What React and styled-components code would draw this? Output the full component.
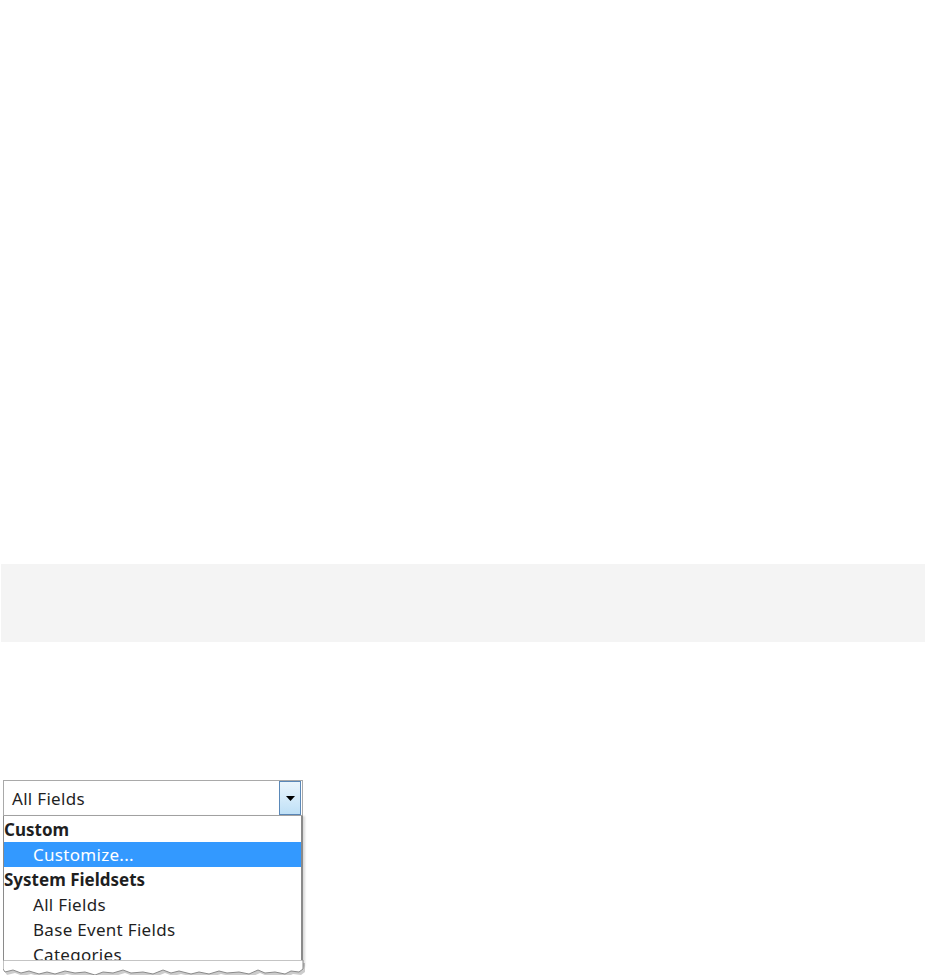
import React from 'react';
import styled, { createGlobalStyle } from 'styled-components';

const GlobalStyle = createGlobalStyle`
    body {
        margin: 0;
        background: #ffffff;
        font-family: 'Noto Sans', 'Open Sans', sans-serif;
    }
`;

const Page = styled.div`
    width: 925px;
    height: 975px;
    overflow: hidden;
    display: flex;
    flex-direction: column;
    padding-top: 564px;
    box-sizing: border-box;

    & > * {
        flex-shrink: 0;
    }
`;

const GrayBand = styled.div`
    margin-left: 1px;
    height: 78px;
    background: #f4f4f4;
`;

const Figure = styled.div`
    margin-top: 138px;
    margin-left: 3px;
    width: 300px;
    display: flex;
    flex-direction: column;
`;

const Combo = styled.div`
    height: 34px;
    border: 1px solid #a9a9a9;
    background: #ffffff;
    display: flex;
    align-items: center;
    justify-content: space-between;
    padding-left: 8px;
`;

const ComboText = styled.span`
    font-size: 17px;
    letter-spacing: 0.3px;
    color: #1f1f1f;
    padding-top: 1px;
`;

const ArrowButton = styled.div`
    width: 20px;
    height: 32px;
    margin-right: 1px;
    border: 1px solid #5a88b8;
    background: linear-gradient(to bottom, #eaf5fc 0%, #d5ebfa 50%, #bfe0f6 100%);
    display: flex;
    align-items: center;
    justify-content: center;
`;

const List = styled.div`
    border-left: 1px solid #8a8a8a;
    border-right: 2px solid #8a8a8a;
    box-shadow: 2px 0 2px rgba(0, 0, 0, 0.15);
    display: flex;
    flex-direction: column;
    padding-top: 1px;
    height: 151px;
    box-sizing: border-box;
    overflow: hidden;
`;

const Row = styled.div`
    height: 25px;
    flex-shrink: 0;
    display: flex;
    align-items: center;
    font-size: 17px;
    white-space: nowrap;
    padding-left: ${({ $indent }) => ($indent ? 29 : 0)}px;
    font-weight: ${({ $group }) => ($group ? 700 : 400)};
    letter-spacing: ${({ $group }) => ($group ? 0 : 0.3)}px;
    color: ${({ $active }) => ($active ? '#ffffff' : '#1f1f1f')};
    background: ${({ $active }) => ($active ? '#3399ff' : 'transparent')};
`;

const TornEdge = styled.svg`
    display: block;
    margin-top: -7px;
`;

const rows = [
    { label: 'Custom', group: true },
    { label: 'Customize...', indent: true, active: true },
    { label: 'System Fieldsets', group: true },
    { label: 'All Fields', indent: true },
    { label: 'Base Event Fields', indent: true },
    { label: 'Categories', indent: true },
];

const edge =
    '0,0 300,0 300,9 296,12 288,11 282,14 272,12 262,13 255,10 246,14 236,12 224,13 216,11 206,14 196,12 188,14 176,11 168,13 160,10 150,14 140,12 128,13 120,10 110,13 100,12 92,15 82,12 72,13 62,11 52,14 44,12 36,14 26,11 18,13 10,10 2,12 0,9';

export default function App() {
    return (
        <>
            <GlobalStyle />
            <Page>
                <GrayBand />
                <Figure>
                    <Combo>
                        <ComboText>All Fields</ComboText>
                        <ArrowButton>
                            <svg width="9" height="5" viewBox="0 0 9 5">
                                <polygon points="0,0 9,0 4.5,5" fill="#000" />
                            </svg>
                        </ArrowButton>
                    </Combo>
                    <List>
                        {rows.map((r) => (
                            <Row key={r.label} $group={r.group} $indent={r.indent} $active={r.active}>
                                {r.label}
                            </Row>
                        ))}
                    </List>
                    <TornEdge width="306" height="19" viewBox="0 0 306 19">
                        <polygon points={edge} transform="translate(2,3)" fill="rgba(0,0,0,0.2)" />
                        <polygon points={edge} fill="#ffffff" stroke="#8a8a8a" strokeWidth="1" />
                    </TornEdge>
                </Figure>
            </Page>
        </>
    );
}
